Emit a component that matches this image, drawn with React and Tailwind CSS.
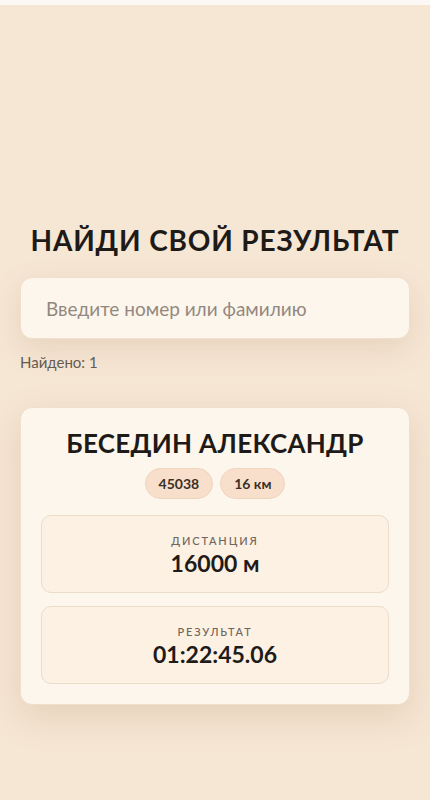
import { useState } from 'react';

function InfoBox({ label, value }) {
  return (
    <div className="flex flex-col items-center rounded-[10px] border border-[#ecdcc8] bg-[#fcf1e3] pt-[17px] pb-[15px]">
      <span className="text-[11px] font-medium uppercase leading-[15px] tracking-[0.17em] text-[#6f655c]">{label}</span>
      <span className="mt-[1px] text-[23px] font-bold leading-[28px] text-[#1f1b18]">{value}</span>
    </div>
  );
}

export default function App() {
  const [query, setQuery] = useState('');

  return (
    <div className="min-h-screen bg-[#f6e6d4] font-['Lato','Noto_Sans',sans-serif]">
      <div className="h-[5px] bg-[#fbf8f5]" />
      <div className="px-5 pt-[218px]">
        <h1 className="text-center text-[28px] font-bold leading-[34px] tracking-[0.03em] text-[#1d1a17]">
          НАЙДИ СВОЙ РЕЗУЛЬТАТ
        </h1>

        <div className="mt-[20px]">
          <input
            value={query}
            onChange={(e) => setQuery(e.target.value)}
            placeholder="Введите номер или фамилию"
            className="h-[62px] w-full rounded-[12px] border border-[#efdfcb] bg-[#fdf6ec] px-[25px] text-[19px] text-[#3a332d] placeholder-[#938880] shadow-[0_10px_30px_rgba(150,110,60,0.15)] focus:outline-none"
          />
        </div>

        <p className="mt-[12px] text-[15px] text-[#655b52]">Найдено: 1</p>

        <div className="mt-[33px] rounded-[12px] border border-[#efdfcb] bg-[#fdf6ec] px-5 pt-[18px] pb-[20px] shadow-[0_12px_36px_rgba(150,110,60,0.18)]">
          <h2 className="text-center text-[26px] font-bold leading-[34px] tracking-[0.01em] text-[#1d1a17]">
            БЕСЕДИН АЛЕКСАНДР
          </h2>
          <div className="mt-[8px] flex justify-center gap-[7px]">
            <span className="flex h-[31px] items-center rounded-full border border-[#f0d3bd] bg-[#f8dfcc] px-[13px] text-[14px] font-bold text-[#3a2f27]">
              45038
            </span>
            <span className="flex h-[31px] items-center rounded-full border border-[#f0d3bd] bg-[#f8dfcc] px-[13px] text-[14px] font-bold text-[#3a2f27]">
              16 км
            </span>
          </div>
          <div className="mt-[16px] flex flex-col gap-[13px]">
            <InfoBox label="Дистанция" value="16000 м" />
            <InfoBox label="Результат" value="01:22:45.06" />
          </div>
        </div>
      </div>
    </div>
  );
}
